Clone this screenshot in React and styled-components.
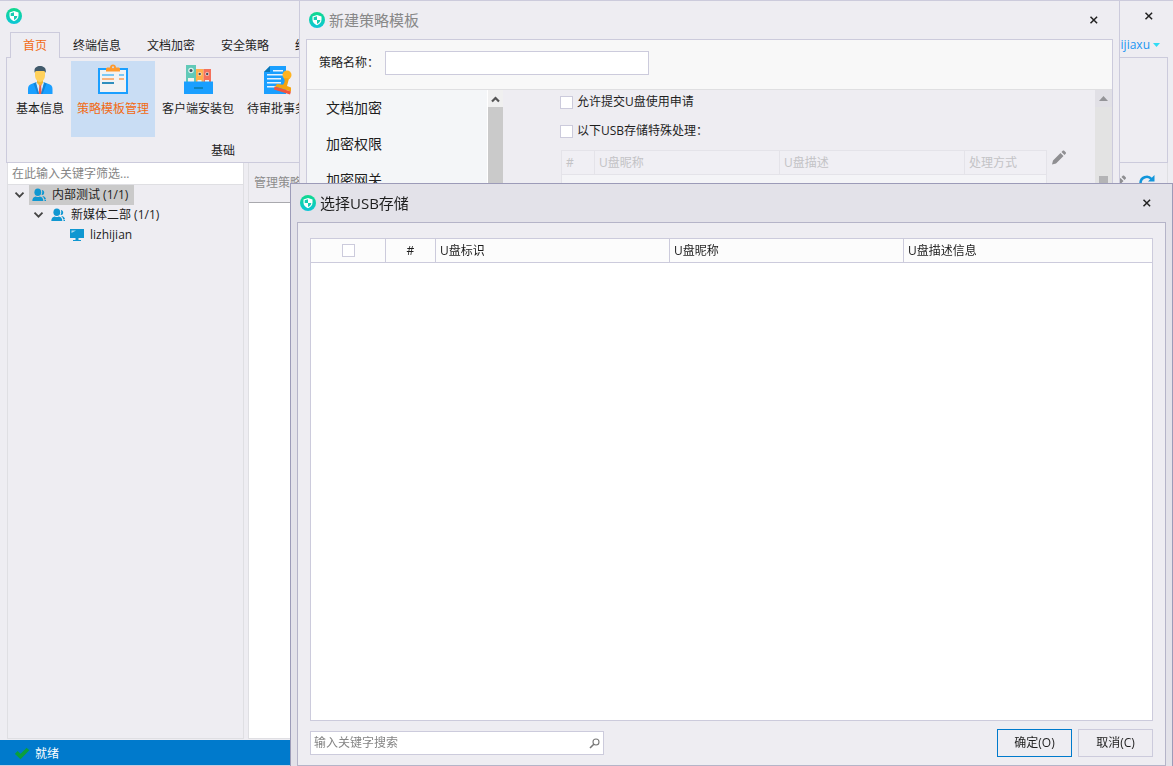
import React, { useState } from "react";
import styled, { createGlobalStyle, css } from "styled-components";

const GlobalStyle = createGlobalStyle`
  * {
    box-sizing: border-box;
  }
  body {
    margin: 0;
    overflow: hidden;
    background: #eeedf2;
  }
  body, button, input, table {
    font-family: "Open Sans", "Noto Sans CJK SC", sans-serif;
    font-size: 12px;
    line-height: 20px;
    color: #1e1e1e;
  }
  button {
    padding: 0;
    border: none;
    background: none;
  }
  svg {
    display: block;
    flex-shrink: 0;
  }
`;

const line = "#cccbdc";

/* ---------- main window ---------- */

const Window = styled.div`
  display: flex;
  flex-direction: column;
  min-height: 100vh;
  border-top: 1px solid ${line};
  border-bottom: 1px solid ${line};
  white-space: nowrap;
`;

const TitleBar = styled.header`
  display: flex;
  justify-content: space-between;
  height: 31px;
  padding: 7px 18px 0 6px;
`;

const CloseButton = styled.button`
  display: flex;
  align-items: center;
  justify-content: center;
  width: 12px;
  height: 16px;
`;

const TabRow = styled.nav`
  position: relative;
  z-index: 1;
  display: flex;
  height: 26px;
  margin-bottom: -1px;
  padding-left: 10px;
`;

const Tab = styled.button`
  padding: 0 12px;
  border: 1px solid transparent;
  border-bottom: none;
  ${(props) =>
    props.$active &&
    css`
      color: #f26a12;
      border-color: ${line};
      background: #eeedf2;
    `}
`;

const UserButton = styled.button`
  display: flex;
  align-items: center;
  gap: 3px;
  margin: 0 13px 0 auto;
  color: #2196f3;
`;

const Ribbon = styled.section`
  height: 106px;
  margin: 0 5px 0 6px;
  border: 1px solid ${line};
`;

const RibbonGroup = styled.div`
  display: flex;
  flex-direction: column;
  width: 432px;
  height: 100%;
  padding: 3px 3px 0;
  text-align: center;
`;

const RibbonItems = styled.div`
  display: flex;
  gap: 1px;
  height: 80px;
`;

const RibbonItem = styled.button`
  display: flex;
  flex-direction: column;
  align-items: center;
  gap: 3px;
  height: 76px;
  padding: 3px 6px 0;
  ${(props) =>
    props.$active &&
    css`
      color: #f26a12;
      background: #c9ddf4;
    `}
`;

const Workspace = styled.main`
  display: flex;
  flex: 1;
  gap: 4px;
  padding: 0 5px 1px 7px;
`;

const SidePanel = styled.aside`
  width: 237px;
  border: 1px solid #dfdfe3;
  border-top: none;
`;

const FilterInput = styled.input`
  display: block;
  width: 100%;
  height: 22px;
  padding: 0 4px;
  border: none;
  border-bottom: 1px solid #dfdfe3;
  background: #fff;
  &::placeholder {
    color: #858585;
  }
`;

const Tree = styled.ul`
  margin: 0;
  padding: 0;
  list-style: none;
`;

const TreeRow = styled.li`
  display: flex;
  align-items: center;
  gap: 3px;
  height: 20px;
  padding-left: ${(props) => props.$level * 19 + 5}px;
`;

const TreeToggle = styled.span`
  width: 13px;
  height: 14px;
`;

const TreeLabel = styled.span`
  display: flex;
  align-items: center;
  gap: 5px;
  height: 20px;
  padding: 0 6px 0 3px;
  background: ${(props) => (props.$selected ? "#cacaca" : "none")};
`;

const ContentPanel = styled.section`
  flex: 1;
  border: 1px solid #dfdfe3;
  border-top: none;
  background: #fff;
`;

const ContentHeader = styled.div`
  display: flex;
  align-items: center;
  gap: 12px;
  height: 40px;
  padding: 0 12px 0 5px;
  border-bottom: 1px solid #a9a9ae;
  background: #eeedf2;
  color: #8c8c8c;
`;

const HeaderTitle = styled.span`
  flex: 1;
`;

const StatusBar = styled.footer`
  display: flex;
  align-items: center;
  gap: 5px;
  height: 25px;
  padding: 2px 15px 0;
  background: #007acc;
  color: #fff;
`;

/* ---------- dialogs ---------- */

const Dialog = styled.section`
  position: fixed;
  z-index: 2;
  display: flex;
  flex-direction: column;
  border: 1px solid ${(props) => (props.$front ? "#9c9bb8" : line)};
  border-bottom: none;
  white-space: nowrap;
`;

const TemplateDialog = styled(Dialog)`
  top: 0;
  left: 299px;
  right: 53px;
  bottom: 60px;
  padding: 0 6px;
  background: #eeedf2;
`;

const UsbDialog = styled(Dialog)`
  top: 183px;
  left: 290px;
  right: 0;
  bottom: 0;
  padding: 0 6px;
  background: #e3e2e9;
`;

const DialogTitle = styled.header`
  display: flex;
  align-items: center;
  gap: 4px;
  height: 38px;
  padding: 0 13px 0 3px;
  h1 {
    flex: 1;
    margin: 0;
    font-size: 15px;
    font-weight: 400;
    color: ${(props) => (props.$muted ? "#888" : "#1e1e1e")};
  }
`;

const DialogBody = styled.div`
  display: flex;
  flex-direction: column;
  flex: 1;
  min-height: 0;
  border: 1px solid ${(props) => (props.$front ? "#b5b4c8" : line)};
  background: #eeedf2;
`;

const NameRow = styled.div`
  display: flex;
  align-items: center;
  gap: 6px;
  height: 50px;
  padding: 0 12px 4px;
  border-bottom: 1px solid #dfdfe1;
  background: #f8f8f8;
`;

const NameInput = styled.input`
  width: 264px;
  height: 24px;
  padding: 0 4px;
  border: 1px solid ${line};
  background: #fff;
`;

const Columns = styled.div`
  display: flex;
  flex: 1;
  min-height: 0;
`;

const CategoryList = styled.ul`
  width: 181px;
  margin: 0;
  padding: 0 19px;
  border-right: 1px solid #fff;
  overflow: hidden;
  list-style: none;
  background: #f4f6f8;
  font-size: 14px;
  line-height: 36px;
`;

const ScrollBar = styled.div`
  display: flex;
  flex-direction: column;
  width: ${(props) => props.$width}px;
  background: ${(props) => props.$track};
`;

const ScrollButton = styled.button`
  display: flex;
  align-items: center;
  justify-content: center;
  height: 17px;
  background: ${(props) => props.$fill};
`;

const ScrollThumb = styled.div`
  flex: 1;
  margin: ${(props) => (props.$slim ? "69px 4px 0" : "0")};
  background: ${(props) => (props.$slim ? "#b4b4b6" : "#cacaca")};
`;

const Settings = styled.div`
  flex: 1;
  padding: 2px 28px 0 57px;
`;

const CheckLabel = styled.label`
  display: flex;
  align-items: center;
  gap: 4px;
  height: 20px;
  margin-bottom: 9px;
`;

const CheckBox = styled.input`
  appearance: none;
  display: block;
  width: 13px;
  height: 13px;
  margin: 0;
  border: 1px solid ${line};
  background: #fff;
  &:checked {
    background: #007acc;
  }
`;

const TableRow = styled.div`
  display: flex;
  gap: 5px;
  height: 200px;
  margin-left: 1px;
`;

const RuleTableBox = styled.div`
  flex: 1;
  border: 1px solid #e4e3e9;
  background: #f4f4f7;
`;

const GridTable = styled.table`
  width: 100%;
  table-layout: fixed;
  border-spacing: 0;
  th {
    height: 24px;
    padding: 0 4px;
    overflow: hidden;
    border: solid ${(props) => (props.$muted ? "#e4e3e9" : line)};
    border-width: 0 1px 1px 0;
    background: ${(props) => (props.$muted ? "#f0eff4" : "#fcfcfc")};
    color: ${(props) => (props.$muted ? "#c3c3c6" : "#1e1e1e")};
    font-weight: 400;
    text-align: left;
  }
  th:last-child {
    border-right: none;
  }
`;

const HeadCell = styled.th`
  && {
    text-align: ${(props) => (props.$center ? "center" : "left")};
  }
  ${CheckBox} {
    margin: 0 auto;
  }
`;

const UsbContent = styled(DialogBody)`
  padding: 15px 12px 8px;
`;

const UsbTableBox = styled.div`
  flex: 1;
  margin-bottom: 8px;
  border: 1px solid ${line};
  background: #fff;
`;

const Footer = styled.footer`
  display: flex;
  align-items: center;
  gap: 6px;
`;

const SearchBox = styled.label`
  display: flex;
  align-items: center;
  width: 294px;
  height: 24px;
  margin-right: auto;
  padding: 0 3px;
  border: 1px solid ${line};
  background: #fff;
  input {
    flex: 1;
    padding: 0;
    border: none;
    outline: none;
  }
  input::placeholder {
    color: #858585;
  }
`;

const DialogButton = styled.button`
  width: 75px;
  height: 28px;
  border: 1px solid ${(props) => (props.$primary ? "#007acc" : line)};
`;

/* ---------- icons ---------- */

const Logo = () => (
  <svg width="16" height="16" viewBox="0 0 16 16">
    <defs>
      <linearGradient id="logo" x1="0" y1="0" x2="0" y2="1">
        <stop offset="0" stopColor="#10d98c" />
        <stop offset="1" stopColor="#0cc6d8" />
      </linearGradient>
    </defs>
    <circle cx="8" cy="8" r="8" fill="url(#logo)" />
    <path d="M8 3l4.500 1.400v3.400c0 2.500-1.800 4.300-4.500 5.400-2.700-1.100-4.500-2.900-4.500-5.400V4.400z" fill="#fff" />
    <path d="M8 4.200v3.800H4.700V5.200z M8 8h3.300c0 1.800-1.300 3.100-3.300 3.900z" fill="#14cdb2" />
  </svg>
);

const CloseIcon = () => (
  <svg width="10" height="10" viewBox="0 0 10 10">
    <path d="M1.500 1.700l6.600 6.600M8.100 1.700L1.500 8.300" stroke="#222" strokeWidth="1.500" />
  </svg>
);

const CaretIcon = () => (
  <svg width="7" height="4" viewBox="0 0 7 4">
    <path d="M0 0h7L3.500 4z" fill="#2fdcf5" />
  </svg>
);

const PersonIcon = () => (
  <svg width="32" height="32" viewBox="0 0 32 32">
    <path d="M4 30v-5c0-3 1.500-4.500 4-5.300l4-1.500h8l4 1.500c3 .8 4.500 2.300 4.500 5.300v5z" fill="#1a9fff" />
    <path d="M11.500 18.500h9L17 30h-2z" fill="#d9ecfb" />
    <path d="M14.800 20h2.900l-.6 2.500.8 7.500h-3.400l.8-7.500z" fill="#f25c4b" />
    <path d="M9.500 19.500l2.500-1 3 11.500h-1.500zM22.500 19.500l-2.500-1L17 30h1.500z" fill="#1486d8" />
    <path d="M13 15h6v4l-3 3-3-3z" fill="#f2b535" />
    <path d="M11 7c0-2 10-2 10 0v4.500c0 3.500-2.500 6.500-5 6.500s-5-3-5-6.500z" fill="#ffd15c" />
    <path d="M10.500 9V6.500C10.500 3.500 13 2 16 2s5.800 1.500 5.800 4.500V9c-.6-1-1-1.800-2-2h-7.500c-1 .2-1.400 1-1.800 2z" fill="#415a6b" />
  </svg>
);

const ClipboardIcon = () => (
  <svg width="32" height="32" viewBox="0 0 32 32">
    <path d="M1 4h30v26H1z" fill="#1a9fff" />
    <path d="M3 6h26v22H3z" fill="#f2f2f2" />
    <path d="M5 10h12v2H5zM22 10h5v2h-5z" fill="#7cc8f5" />
    <path d="M5 14h12v2H5zM22 14h5v2h-5z" fill="#f9b27c" />
    <path d="M5 18h12v2H5z" fill="#2e8fbe" />
    <path d="M9 7.500V5c0-1 .8-1.500 2-1.500h2c0-2 1.200-3 3-3s3 1 3 3h2c1.200 0 2 .5 2 1.500v2.500z" fill="#ff9a2e" />
    <circle cx="16" cy="3.200" r="1" fill="#c9ddf4" />
  </svg>
);

const BinderIcon = () => (
  <svg width="32" height="32" viewBox="0 0 32 32">
    <path d="M4 1h10v18H4z" fill="#61c9b8" />
    <path d="M14 5h7.500v14H14z" fill="#ffb04c" />
    <path d="M21.500 5H29v14h-7.500z" fill="#f4705b" />
    <circle cx="9" cy="6.500" r="2.800" fill="#d7f1ec" />
    <circle cx="9" cy="6.500" r="1.500" fill="#3e5263" />
    <circle cx="17.700" cy="10" r="2" fill="#ffe2b8" />
    <circle cx="17.700" cy="10" r="1.200" fill="#3e5263" />
    <circle cx="25.200" cy="10" r="2" fill="#fbd0c8" />
    <circle cx="25.200" cy="10" r="1.200" fill="#3e5263" />
    <path d="M6 14h6v4H6zM15.500 16h4v2h-4zM23 16h4v2h-4z" fill="#f5f3ee" />
    <path d="M2 17.500h29V30H2z" fill="#1a9fff" />
    <path d="M12 23h9v2h-9z" fill="#0d84bd" />
  </svg>
);

const StampIcon = () => (
  <svg width="32" height="32" viewBox="0 0 32 32">
    <path d="M3 8l6-6h16v28H3z" fill="#1a9fff" />
    <path d="M3 8l6-6v6z" fill="#0b76b5" />
    <path d="M12 6h10v1.500H12zM6 10h16v1.500H6zM6 14h14v1.500H6zM6 18h14v1.500H6zM6 22h9v1.500H6z" fill="#e6f3ff" />
    <circle cx="26" cy="11" r="4.500" fill="#ffb31f" />
    <path d="M23 14l5 .5-2 7.500 4 1.500v4L14 22.500l2-2.500 6 .8c2-2.500 2-4.500 1-6.800z" fill="#f5a30f" />
    <path d="M13.500 22.500l16.500 5-1 3-16-5z" fill="#f2543d" />
  </svg>
);

const ChevronIcon = () => (
  <svg width="13" height="14" viewBox="0 0 13 14">
    <path d="M2.500 4.700l4 4 4-4" fill="none" stroke="#444" strokeWidth="1.800" />
  </svg>
);

const UsersIcon = () => (
  <svg width="15" height="14" viewBox="0 0 15 14">
    <ellipse cx="5.800" cy="4.200" rx="3.400" ry="3.800" fill="#0f97d1" />
    <path d="M.3 13c0-2.800 1.400-4.300 3.500-4.600 1.200.8 2.900.8 4 0 2.200.3 3.500 1.800 3.500 4.600z" fill="#0f97d1" />
    <path d="M9.800 2c1.700.2 2.500 1.300 2.400 2.800-.1 1.200-.7 1.900-1.500 2.300l-1.200-.3c.9-1.500 1-3.300.3-4.800z" fill="#0f97d1" />
    <path d="M10.300 8c2 .2 3.400 1.300 3.700 3.200l-1.700.2c-.3-1.400-1-2.500-2-3.400zM12.500 12h1.500v1h-1.500z" fill="#0f97d1" />
  </svg>
);

const MonitorIcon = () => (
  <svg width="15" height="14" viewBox="0 0 15 14">
    <path d="M0 1h14v9H0z M5.500 10h3v2h-3z M3 12h8v1H3z" fill="#0f97d1" />
    <path d="M1.500 5V2.500H6z" fill="#a9dcf0" />
  </svg>
);

const PencilIcon = () => (
  <svg width="15" height="15" viewBox="0 0 15 15">
    <path d="M0 14.500l1-4L8.500 3 11.500 6 4 13.500zM9.500 2l1.200-1.200c.5-.5 1-.5 1.500 0l1.500 1.500c.5.5.5 1 0 1.500L12.500 5z" fill="#8f8f92" />
  </svg>
);

const RefreshIcon = () => (
  <svg width="16" height="16" viewBox="0 0 16 16">
    <path d="M1.500 8a6.300 6.300 0 0 1 11-4" fill="none" stroke="#1296db" strokeWidth="2.500" />
    <path d="M15.500 0v6.500H9z" fill="#1296db" />
    <path d="M14.500 9a6.300 6.300 0 0 1-11 3.500" fill="none" stroke="#1296db" strokeWidth="2.500" />
  </svg>
);

const CheckIcon = () => (
  <svg width="15" height="14" viewBox="0 0 15 14">
    <path d="M1.300 5.500l4.200 4 7.500-7.500" fill="none" stroke="#0a9f3c" strokeWidth="3.800" />
  </svg>
);

const ArrowUpIcon = () => (
  <svg width="9" height="8" viewBox="0 0 9 8">
    <path d="M1 6.500L4.500 3 8 6.500" fill="none" stroke="#555" strokeWidth="2.200" />
  </svg>
);

const TriangleUpIcon = () => (
  <svg width="9" height="5" viewBox="0 0 9 5">
    <path d="M0 5h9L4.500 0z" fill="#949498" />
  </svg>
);

const SearchIcon = () => (
  <svg width="11" height="11" viewBox="0 0 11 11">
    <circle cx="7" cy="4" r="3" fill="none" stroke="#777" strokeWidth="1.100" />
    <path d="M4.800 6.200L1 10" stroke="#777" strokeWidth="1.600" />
  </svg>
);

/* ---------- data ---------- */

const tabs = ["首页", "终端信息", "文档加密", "安全策略", "终端管理"];

const ribbonItems = [
  { label: "基本信息", Icon: PersonIcon },
  { label: "策略模板管理", Icon: ClipboardIcon },
  { label: "客户端安装包", Icon: BinderIcon },
  { label: "待审批事务", Icon: StampIcon }
];

const treeNodes = [
  { label: "内部测试 (1/1)", level: 0, Icon: UsersIcon, open: true },
  { label: "新媒体二部 (1/1)", level: 1, Icon: UsersIcon, open: true },
  { label: "lizhijian", level: 2, Icon: MonitorIcon }
];

const categories = ["文档加密", "加密权限", "加密网关"];

function MainWindow() {
  const [tab, setTab] = useState("首页");
  const [item, setItem] = useState("策略模板管理");
  const [node, setNode] = useState("内部测试 (1/1)");

  return (
    <Window>
      <TitleBar>
        <Logo />
        <CloseButton aria-label="关闭">
          <CloseIcon />
        </CloseButton>
      </TitleBar>
      <TabRow>
        {tabs.map((name) => (
          <Tab key={name} $active={name === tab} onClick={() => setTab(name)}>
            {name}
          </Tab>
        ))}
        <UserButton>
          lijiaxu <CaretIcon />
        </UserButton>
      </TabRow>
      <Ribbon>
        <RibbonGroup>
          <RibbonItems>
            {ribbonItems.map(({ label, Icon }) => (
              <RibbonItem
                key={label}
                $active={label === item}
                onClick={() => setItem(label)}
              >
                <Icon />
                {label}
              </RibbonItem>
            ))}
          </RibbonItems>
          基础
        </RibbonGroup>
      </Ribbon>
      <Workspace>
        <SidePanel>
          <FilterInput
            placeholder="在此输入关键字筛选..."
            aria-label="关键字筛选"
          />
          <Tree>
            {treeNodes.map(({ label, level, Icon, open }) => (
              <TreeRow key={label} $level={level}>
                <TreeToggle>{open && <ChevronIcon />}</TreeToggle>
                <TreeLabel
                  $selected={label === node}
                  onClick={() => setNode(label)}
                >
                  <Icon />
                  {label}
                </TreeLabel>
              </TreeRow>
            ))}
          </Tree>
        </SidePanel>
        <ContentPanel>
          <ContentHeader>
            <HeaderTitle>管理策略模板</HeaderTitle>
            <PencilIcon />
            <RefreshIcon />
          </ContentHeader>
        </ContentPanel>
      </Workspace>
      <StatusBar>
        <CheckIcon />
        就绪
      </StatusBar>
    </Window>
  );
}

function NewTemplateDialog() {
  return (
    <TemplateDialog>
      <DialogTitle $muted>
        <Logo />
        <h1>新建策略模板</h1>
        <CloseButton aria-label="关闭">
          <CloseIcon />
        </CloseButton>
      </DialogTitle>
      <DialogBody>
        <NameRow>
          <label htmlFor="name">策略名称：</label>
          <NameInput id="name" />
        </NameRow>
        <Columns>
          <CategoryList>
            {categories.map((name) => (
              <li key={name}>{name}</li>
            ))}
          </CategoryList>
          <ScrollBar $width={15} $track="#f0f0f0">
            <ScrollButton $fill="#f0f0f0" aria-label="向上">
              <ArrowUpIcon />
            </ScrollButton>
            <ScrollThumb />
          </ScrollBar>
          <Settings>
            <CheckLabel>
              <CheckBox type="checkbox" />
              允许提交U盘使用申请
            </CheckLabel>
            <CheckLabel>
              <CheckBox type="checkbox" />
              以下USB存储特殊处理：
            </CheckLabel>
            <TableRow>
              <RuleTableBox>
                <GridTable $muted>
                  <colgroup>
                    <col width="33" />
                    <col />
                    <col />
                    <col width="81" />
                  </colgroup>
                  <thead>
                    <tr>
                      <th>#</th>
                      <th>U盘昵称</th>
                      <th>U盘描述</th>
                      <th>处理方式</th>
                    </tr>
                  </thead>
                </GridTable>
              </RuleTableBox>
              <PencilIcon />
            </TableRow>
          </Settings>
          <ScrollBar $width={17} $track="#e3e3e3">
            <ScrollButton $fill="#e1e0e6" aria-label="向上">
              <TriangleUpIcon />
            </ScrollButton>
            <ScrollThumb $slim />
          </ScrollBar>
        </Columns>
      </DialogBody>
    </TemplateDialog>
  );
}

function SelectUsbDialog() {
  return (
    <UsbDialog $front>
      <DialogTitle>
        <Logo />
        <h1>选择USB存储</h1>
        <CloseButton aria-label="关闭">
          <CloseIcon />
        </CloseButton>
      </DialogTitle>
      <UsbContent $front>
        <UsbTableBox>
          <GridTable>
            <colgroup>
              <col width="75" />
              <col width="50" />
              <col width="234" />
              <col width="234" />
              <col />
            </colgroup>
            <thead>
              <tr>
                <HeadCell $center>
                  <CheckBox type="checkbox" aria-label="全选" />
                </HeadCell>
                <HeadCell $center>#</HeadCell>
                <HeadCell>U盘标识</HeadCell>
                <HeadCell>U盘昵称</HeadCell>
                <HeadCell>U盘描述信息</HeadCell>
              </tr>
            </thead>
          </GridTable>
        </UsbTableBox>
        <Footer>
          <SearchBox>
            <input placeholder="输入关键字搜索" />
            <SearchIcon />
          </SearchBox>
          <DialogButton $primary>确定(O)</DialogButton>
          <DialogButton>取消(C)</DialogButton>
        </Footer>
      </UsbContent>
    </UsbDialog>
  );
}

function App() {
  return (
    <>
      <GlobalStyle />
      <MainWindow />
      <NewTemplateDialog />
      <SelectUsbDialog />
    </>
  );
}

export default App;
